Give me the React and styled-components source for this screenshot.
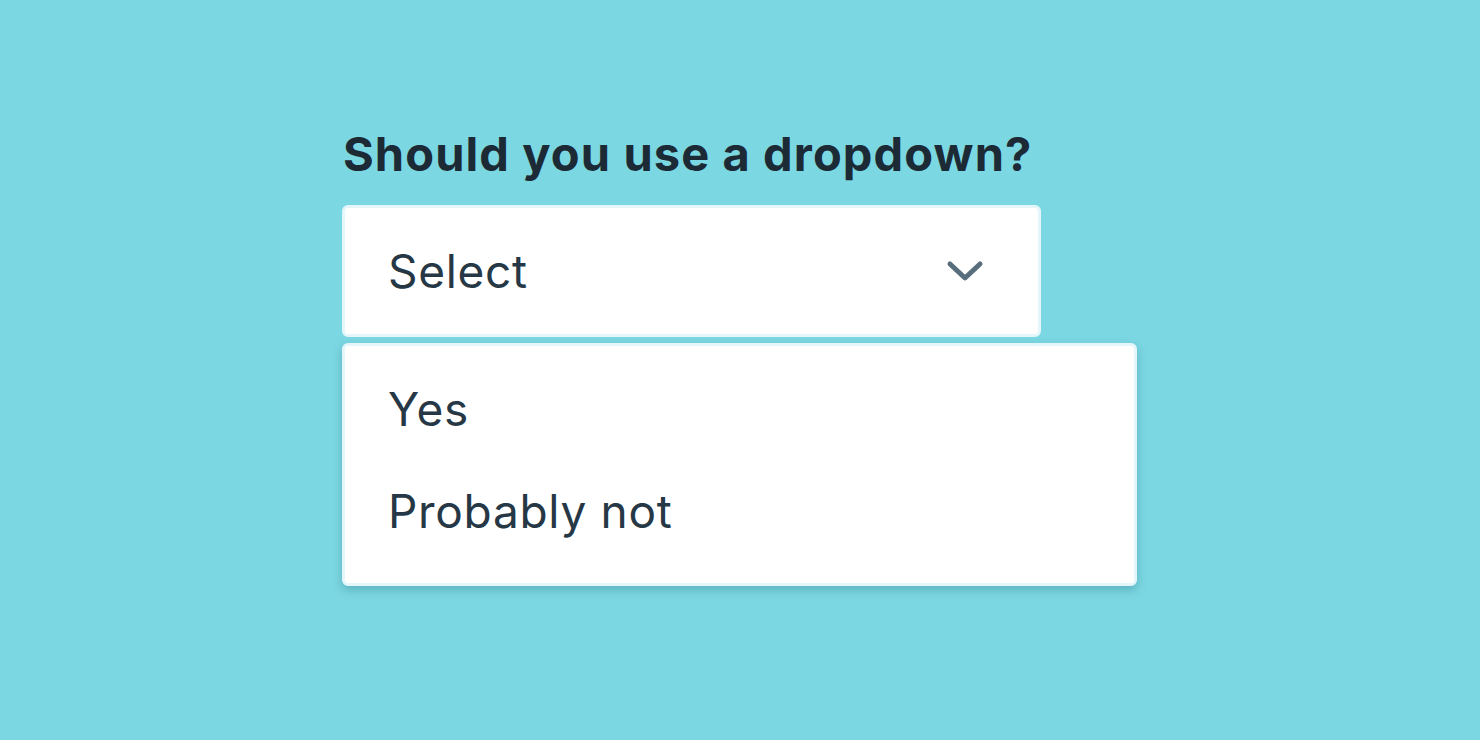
import React from "react";
import styled, { createGlobalStyle } from "styled-components";

const GlobalStyle = createGlobalStyle`
  html, body {
    margin: 0;
    padding: 0;
    background: #7bd7e2;
  }
  body {
    font-family: Inter, "Noto Sans", "Liberation Sans", sans-serif;
  }
`;

const options = ["Yes", "Probably not"];

export default function App() {
  return (
    <Page>
      <GlobalStyle />
      <Field>
        <Label>Should you use a dropdown?</Label>
        <SelectBox>
          <span>Select</span>
          <svg width="40" height="26" viewBox="0 0 40 26" fill="none">
            <path
              d="M5 6 L20 20 L35 6"
              stroke="#586e7d"
              strokeWidth="5"
              strokeLinecap="round"
              strokeLinejoin="round"
            />
          </svg>
        </SelectBox>
        <Menu>
          {options.map((o) => (
            <Option key={o}>{o}</Option>
          ))}
        </Menu>
      </Field>
    </Page>
  );
}

const Page = styled.div`
  width: 1480px;
  height: 740px;
  background: #7bd7e2;
  display: flex;
  justify-content: flex-start;
  padding: 124px 0 0 342px;
  box-sizing: border-box;
`;

const Field = styled.div`
  display: flex;
  flex-direction: column;
  align-items: flex-start;
`;

const Label = styled.h1`
  margin: 0 0 0 1px;
  font-size: 47px;
  font-weight: 700;
  color: #1b2a35;
  line-height: 60px;
  letter-spacing: 1.1px;
`;

const SelectBox = styled.div`
  margin-top: 21px;
  width: 699px;
  height: 132px;
  box-sizing: border-box;
  background: #fff;
  border: 3px solid #e4f6f9;
  border-radius: 6px;
  display: flex;
  align-items: center;
  justify-content: space-between;
  padding: 0 53px 0 43px;
  font-size: 46px;
  letter-spacing: 0.7px;
  color: #263745;
`;

const Menu = styled.div`
  margin-top: 6px;
  width: 795px;
  height: 243px;
  box-sizing: border-box;
  background: #fff;
  border: 3px solid #e4f6f9;
  border-radius: 6px;
  box-shadow: 0 4px 10px rgba(40, 110, 125, 0.35);
  display: flex;
  flex-direction: column;
  padding: 33px 43px;
  gap: 42px;
`;

const Option = styled.div`
  font-size: 46px;
  line-height: 60px;
  letter-spacing: 0.7px;
  color: #263745;
`;
